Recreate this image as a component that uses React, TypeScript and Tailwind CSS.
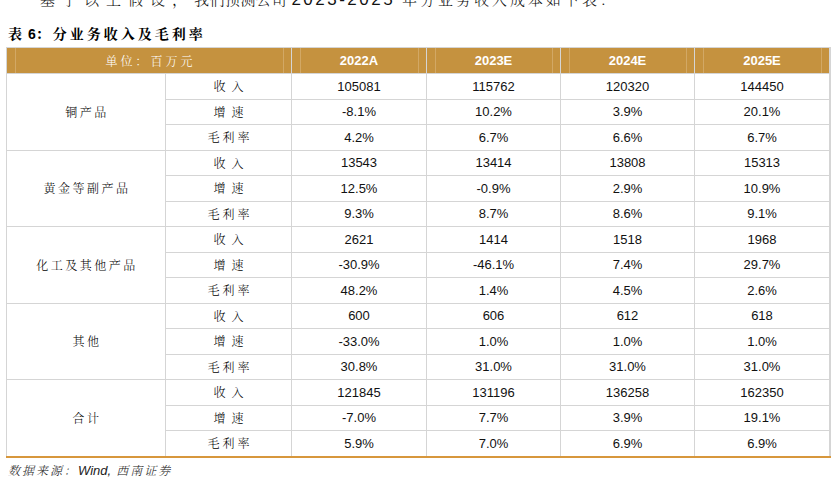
import React from "react";

const serif = { fontFamily: '"Noto Serif CJK SC", "Noto Sans CJK SC", serif' };
const arial = { fontFamily: '"Liberation Sans", Arial, sans-serif' };

type Group = { name: string; rows: [string, string[]][] };

const groups: Group[] = [
  {
    name: "铜产品",
    rows: [
      ["收入", ["105081", "115762", "120320", "144450"]],
      ["增速", ["-8.1%", "10.2%", "3.9%", "20.1%"]],
      ["毛利率", ["4.2%", "6.7%", "6.6%", "6.7%"]],
    ],
  },
  {
    name: "黄金等副产品",
    rows: [
      ["收入", ["13543", "13414", "13808", "15313"]],
      ["增速", ["12.5%", "-0.9%", "2.9%", "10.9%"]],
      ["毛利率", ["9.3%", "8.7%", "8.6%", "9.1%"]],
    ],
  },
  {
    name: "化工及其他产品",
    rows: [
      ["收入", ["2621", "1414", "1518", "1968"]],
      ["增速", ["-30.9%", "-46.1%", "7.4%", "29.7%"]],
      ["毛利率", ["48.2%", "1.4%", "4.5%", "2.6%"]],
    ],
  },
  {
    name: "其他",
    rows: [
      ["收入", ["600", "606", "612", "618"]],
      ["增速", ["-33.0%", "1.0%", "1.0%", "1.0%"]],
      ["毛利率", ["30.8%", "31.0%", "31.0%", "31.0%"]],
    ],
  },
  {
    name: "合计",
    rows: [
      ["收入", ["121845", "131196", "136258", "162350"]],
      ["增速", ["-7.0%", "7.7%", "3.9%", "19.1%"]],
      ["毛利率", ["5.9%", "7.0%", "6.9%", "6.9%"]],
    ],
  },
];

function HeaderCell({ children, span2 }: { children: React.ReactNode; span2?: boolean }) {
  return (
    <div
      className={`relative flex items-center justify-center bg-[#c5923f] text-white ${span2 ? "col-span-2" : ""}`}
    >
      <div className="absolute top-0 bottom-0 left-[8px] w-px bg-[#d2a865]" />
      <div className="absolute top-0 bottom-0 right-[7px] w-px bg-[#d2a865]" />
      {children}
    </div>
  );
}

export default function App() {
  const rowsTpl = "25px " + Array(15).fill("24.5px").join(" ");
  return (
    <div className="w-[836px] h-[481px] bg-white overflow-hidden relative text-black">
      <div
        className="absolute left-[40px] top-[-10px] text-[15px] leading-[18px] whitespace-nowrap text-[#111] font-light"
        style={serif}
      >
        <span className="tracking-[7px]">基于以上假设，</span>
        <span className="tracking-[0.5px]">我们预测公司 </span>
        <span className="text-[17px] tracking-[2.5px] font-normal" style={arial}>
          2023-2025
        </span>
        <span className="tracking-[3px]"> 年分业务收入成本如下表：</span>
      </div>

      <div className="pt-[19px] pl-[8px] flex items-center h-[47px]">
        <div className="text-[14px] font-bold leading-[16px] whitespace-nowrap" style={serif}>
          <span className="tracking-[2px]">表</span>
          <span style={arial}> 6</span>
          <span className="tracking-[3px]">：分业务收入及毛利率</span>
        </div>
      </div>

      <div className="ml-[6px] w-[825px] bg-[#d5d5d5] pt-px px-px border-b-2 border-[#d7973c]">
        <div
          className="grid gap-px"
          style={{
            gridTemplateColumns: "158px 125px 134px 133px 133px 134px",
            gridTemplateRows: rowsTpl,
          }}
        >
          <HeaderCell span2>
            <span className="text-[12px] tracking-[3px] pl-[3px] font-light" style={serif}>
              单位：百万元
            </span>
          </HeaderCell>
          {["2022A", "2023E", "2024E", "2025E"].map((y) => (
            <HeaderCell key={y}>
              <span className="text-[13px] font-bold" style={arial}>
                {y}
              </span>
            </HeaderCell>
          ))}

          {groups.map((g) => (
            <React.Fragment key={g.name}>
              <div className="row-span-3 bg-white flex items-center justify-center">
                <span className="text-[12px] tracking-[2.5px] pl-[2px] font-light" style={serif}>
                  {g.name}
                </span>
              </div>
              {g.rows.map(([label, vals]) => (
                <React.Fragment key={label}>
                  <div className="bg-white flex items-center justify-center">
                    <span
                      className={`text-[12px] font-light ${label.length === 2 ? "tracking-[6px] pl-[6px]" : "tracking-[3px] pl-[3px]"}`}
                      style={serif}
                    >
                      {label}
                    </span>
                  </div>
                  {vals.map((v, vi) => (
                    <div
                      key={vi}
                      className="bg-white flex items-center justify-center text-[13px] text-[#111]"
                      style={arial}
                    >
                      {v}
                    </div>
                  ))}
                </React.Fragment>
              ))}
            </React.Fragment>
          ))}
        </div>
      </div>

      <div className="pl-[8px] pt-[5px] text-[12px] italic leading-[14px] whitespace-nowrap text-[#222] font-light" style={serif}>
        <span className="tracking-[2px]">数据来源：</span>
        <span style={arial} className="text-[13px] font-normal">
          Wind,
        </span>
        <span className="tracking-[2px]"> 西南证券</span>
      </div>
    </div>
  );
}
